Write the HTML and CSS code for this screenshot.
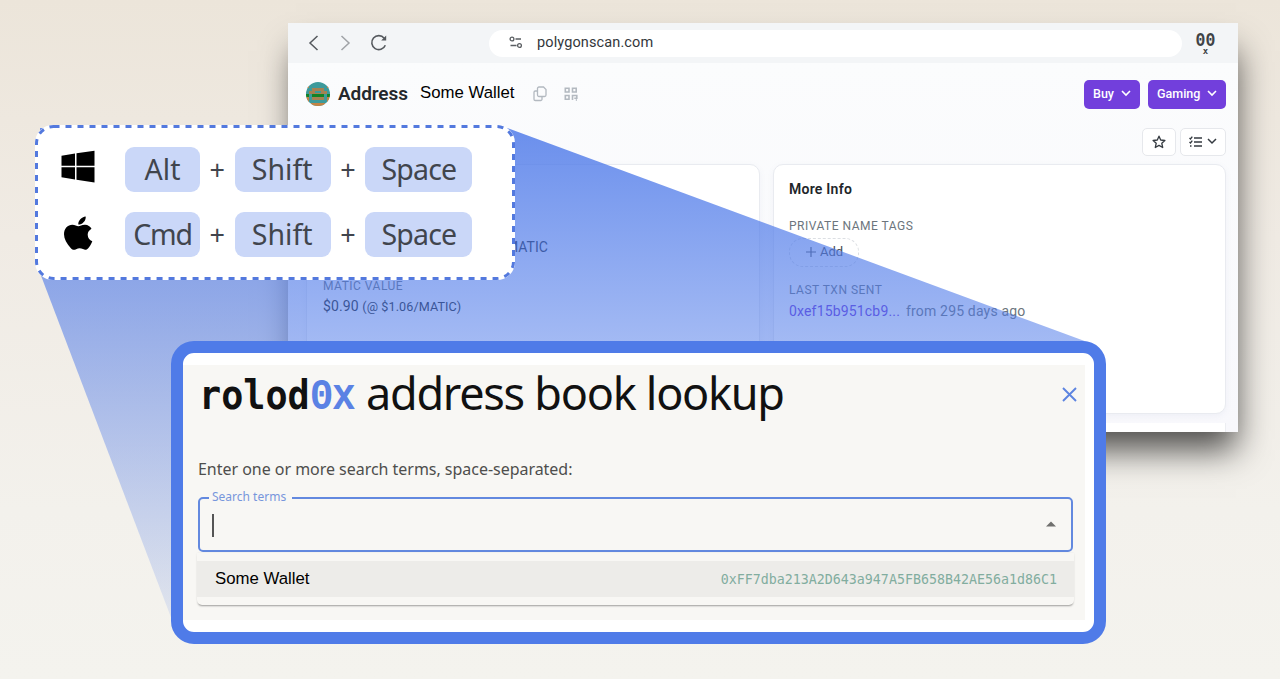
FILE: index.html
```html
<!DOCTYPE html>
<html lang="en">
<head>
<meta charset="utf-8">
<title>rolod0x address book lookup</title>
<link rel="stylesheet" href="styles.css">
</head>
<body>
<main class="stage">
  <section class="browser">
    <header class="toolbar">
      <div class="nav">
        <svg width="12" height="16" viewBox="0 0 12 16"><path d="M9.5 1 2 8l7.500 7" stroke="#55595e"/></svg>
        <svg width="12" height="16" viewBox="0 0 12 16"><path d="M2.500 1 10 8l-7.500 7" stroke="#a0a3a7"/></svg>
        <svg width="18" height="18" viewBox="0 0 18 18"><path d="M15.300 11.200a7 7 0 1 1-1.100-7" stroke="#55595e" stroke-width="1.600"/><path d="M16.200 1.500v5h-5z" fill="#55595e" stroke="none"/></svg>
      </div>
      <div class="urlbar">
        <svg width="14" height="14" viewBox="0 0 14 14" stroke="#5a5e62" stroke-width="1.300"><circle cx="3" cy="3" r="1.900"/><path d="M6.500 3H12M1.500 9.500h6"/><circle cx="10.500" cy="9.500" r="1.900"/></svg>
        <span>polygonscan.com</span>
      </div>
      <div class="ext"><b>00</b><i>x</i></div>
    </header>
    <div class="page">
      <div class="titlebar">
        <svg class="avatar" width="24" height="24" viewBox="0 0 24 24"><defs><clipPath id="disc"><circle cx="12" cy="12" r="12"/></clipPath></defs><g clip-path="url(#disc)" stroke="none"><path fill="#3d9a9b" d="M0 0h24v24H0z"/><path fill="#c48345" d="M0 3h3v3H0zM21 3h3v3h-3zM0 15h3v9H0zM21 15h3v9h-3zM5 21h14v3H5z"/><path fill="#a58252" d="M6 6h12v3h3v3H3V9h3zM6 15h12v3H6z"/><path fill="#3d9a9b" d="M9 9h6v2H9z"/><path fill="#138325" d="M6 12h12v3H6zM0 12h3v3H0zM21 12h3v3h-3z"/></g></svg>
        <h1>Address</h1>
        <span class="wallet">Some Wallet</span>
        <svg class="copy" width="14" height="16" viewBox="0 0 14 16" stroke="#b3b9c0" stroke-width="1.300"><path d="M6 1h4.500L13 3.500V9a1.500 1.500 0 0 1-1.500 1.500H6A1.500 1.500 0 0 1 4.500 9V2.500A1.500 1.500 0 0 1 6 1z"/><path d="M4.500 5H2.300A1.300 1.300 0 0 0 1 6.300v6.900a1.300 1.300 0 0 0 1.300 1.300h5.400A1.300 1.300 0 0 0 9 13.200v-2.700"/></svg>
        <svg width="14" height="14" viewBox="0 0 14 14" stroke="#b3b9c0" stroke-width="1.600"><path d="M1.300 1.300h3.700V5H1.300zM8.500 1.300h3.700V5H8.500zM1.300 8.500h3.700v3.700H1.300z"/><path d="M8.500 13V8.500h4.300v2.700h-2.500M11.800 13h1.200"/></svg>
        <div class="actions">
          <span class="btn buy">Buy <svg width="10" height="7" viewBox="0 0 10 7"><path d="m1 1 4 4 4-4" stroke="#fff" stroke-width="1.600"/></svg></span>
          <span class="btn gaming">Gaming <svg width="10" height="7" viewBox="0 0 10 7"><path d="m1 1 4 4 4-4" stroke="#fff" stroke-width="1.600"/></svg></span>
        </div>
      </div>
      <div class="tools">
        <span class="tool"><svg width="14" height="14" viewBox="0 0 14 14"><path d="m7 1.200 1.700 3.800 4.200.5-3.100 2.800.9 4.200L7 10.400l-3.700 2.100.9-4.200L1.100 5.500l4.200-.5z" stroke="#343a40" stroke-width="1.300" stroke-linejoin="round"/></svg></span>
        <span class="tool wide"><svg width="13" height="12" viewBox="0 0 13 12" stroke="#343a40" stroke-width="1.300"><path d="M5 2h8M5 6h8M5 10h8M.5 2l1 1L3.300.700M.5 6l1 1 1.800-2.300M1 10h1.500"/></svg><svg width="10" height="7" viewBox="0 0 10 7"><path d="m1 1 4 4 4-4" stroke="#343a40" stroke-width="1.500"/></svg></span>
      </div>
      <div class="cards">
        <article class="card overview">
          <p class="amount">MATIC</p>
          <p class="label">MATIC VALUE</p>
          <p class="value">$0.90 <small>(@ $1.06/MATIC)</small></p>
        </article>
        <article class="card info">
          <h2>More Info</h2>
          <p class="label">PRIVATE NAME TAGS</p>
          <span class="add"><svg width="10" height="10" viewBox="0 0 10 10"><path d="M5 0v10M0 5h10" stroke="#55595f" stroke-width="1.200"/></svg>Add</span>
          <p class="label">LAST TXN SENT</p>
          <p class="txn"><a>0xef15b951cb9...</a><span>from 295 days ago</span></p>
        </article>
      </div>
      <div class="nextcard"></div>
    </div>
  </section>

  <svg class="beam" width="1280" height="679" viewBox="0 0 1280 679">
    <defs><linearGradient id="fade" gradientUnits="userSpaceOnUse" x1="0" y1="128" x2="0" y2="630"><stop offset="0" stop-color="#4d79e9" stop-opacity=".83"/><stop offset="1" stop-color="#4d79e9" stop-opacity=".1"/></linearGradient></defs>
    <path fill="url(#fade)" d="M507 128 1090 343V620H172L40 273V128z"/>
  </svg>

  <section class="shortcuts">
    <svg class="dashes" width="480" height="155" viewBox="0 0 480 155"><rect x="1.500" y="1.500" width="477" height="152" rx="17" stroke="#5379de" stroke-width="3" stroke-dasharray="6 6"/></svg>
    <div class="combo">
      <svg class="os" width="34" height="34" viewBox="0 0 34 34" stroke="none"><path d="M.5 5.700 14 3.600v12.200H.5zM15.500 3.300 33.500.700v15.100h-18zM.5 17.200H14v12.200L.5 27.300zM15.500 17.200h18v15.300l-18-2.700z"/></svg>
      <kbd class="k1">Alt</kbd><span>+</span><kbd class="k2">Shift</kbd><span>+</span><kbd class="k3">Space</kbd>
    </div>
    <div class="combo">
      <svg class="os apple" width="34" height="36" viewBox="0 0 34 36" stroke="none"><path d="M17.300 9.600C17 5.600 20.500 2 24.700 1.500c.5 4.300-3.200 8-7.400 8.100zM30.500 13.700c-2.300 1.400-3.800 3.200-3.800 6 0 3.100 1.900 5.500 4.600 6.500-1 3-2.600 5.300-4.300 7.200-1.500 1.600-3 1.600-5 .7-2.500-1.100-4.500-1-6.900.1-2 .9-3.600.7-5.200-1C5.700 28.800 3 24 3 19.300c0-6 3.800-9.600 8.300-9.600 2.500 0 4.500 1.600 6.100 1.600s3.700-1.800 6.800-1.600c2.700.2 4.900 1.500 6.300 4z"/></svg>
      <kbd class="k1 cmd">Cmd</kbd><span>+</span><kbd class="k2">Shift</kbd><span>+</span><kbd class="k3">Space</kbd>
    </div>
  </section>

  <section class="popup">
    <div class="panel">
      <div class="heading">
        <b class="logo">rolod<em>0x</em></b><span class="name">address book lookup</span>
        <svg class="close" width="15" height="15" viewBox="0 0 15 15"><path d="m1 1 13 13M14 1 1 14" stroke="#5d84e0" stroke-width="1.900"/></svg>
      </div>
      <p class="hint">Enter one or more search terms, space-separated:</p>
      <fieldset class="field">
        <legend>Search terms</legend>
        <span class="caret"></span>
        <svg class="arrow" width="10" height="6" viewBox="0 0 10 6"><path d="M0 5.500 5 .5l5 5z" fill="#70706e"/></svg>
      </fieldset>
      <div class="list">
        <div class="option"><span>Some Wallet</span><code>0xFF7dba213A2D643a947A5FB658B42AE56a1d86C1</code></div>
      </div>
    </div>
  </section>
</main>
</body>
</html>
```

FILE: styles.css
```css
* { box-sizing: border-box; }
body { margin: 0; }
p, h1, h2 { margin: 0; font-weight: 400; }
svg { display: block; fill: none; flex: none; }

.stage {
  position: relative;
  width: 1280px;
  height: 679px;
  overflow: hidden;
  background: linear-gradient(180deg, #ece5da 0, #f0ebe4 35%, #f3f1ec 75%, #f4f3ee 100%);
  font-family: Roboto, "Liberation Sans", sans-serif;
}

/* Browser window */
.browser {
  position: absolute;
  left: 288px;
  top: 23px;
  width: 950px;
  height: 409px;
  display: flex;
  flex-direction: column;
  background: #fafbfd;
  box-shadow: 3px 23px 32px -5px rgba(0, 0, 0, .68);
}
.toolbar {
  height: 40px;
  display: flex;
  align-items: center;
  background: #f3f5f7;
  flex: none;
}
.nav { display: flex; align-items: center; gap: 19px; width: 201px; padding-left: 19.5px; stroke-width: 1.5; }
.urlbar {
  width: 693px;
  height: 27px;
  border-radius: 14px;
  padding: 0 0 1px 20px;
  display: flex;
  align-items: center;
  gap: 14px;
  background: #fff;
  color: #33373b;
  font-size: 14.5px;
  letter-spacing: .12px;
}
.ext { width: 47px; padding-top: 3px; display: flex; flex-direction: column; align-items: center; color: #404346; }
.ext b { font: bold 16.5px/14px "Liberation Mono", monospace; transform: scaleY(1.2); }
.ext i { font: bold 9px/7px "DejaVu Sans Mono", monospace; }

.page { flex: 1; padding: 0 12px 0 18px; display: flex; flex-direction: column; background: linear-gradient(#fbfcfd, #f8f8fc); }
.titlebar { display: flex; align-items: center; height: 62px; }
.titlebar h1 { margin-left: 8px; width: 82px; padding-bottom: 2px; font-size: 19px; font-weight: 600; color: #24282c; letter-spacing: -.1px; }
.wallet { font: 16.8px "Liberation Sans", sans-serif; color: #000; width: 113px; padding-bottom: 2px; }
.copy { margin-right: 17px; }
.actions { margin-left: auto; display: flex; gap: 8px; }
.btn {
  height: 29px;
  border-radius: 5px;
  padding: 0 9px 2px;
  display: flex;
  align-items: center;
  justify-content: space-between;
  background: #723fdc;
  color: #fff;
  font-size: 12.5px;
  font-weight: 500;
}
.buy { width: 56px; }
.gaming { width: 78px; }
.tools { display: flex; justify-content: flex-end; gap: 4px; padding-top: 3px; height: 39px; }
.tool { width: 34px; height: 28px; display: flex; align-items: center; justify-content: center; gap: 5px; background: #fff; border: 1px solid #e6e8ec; border-radius: 5px; }
.tool.wide { width: 46px; padding-bottom: 1px; }
.cards { display: grid; grid-template-columns: 454px 453px; gap: 13px; height: 250px; }
.card { background: #fff; border: 1px solid #e9ebf0; border-radius: 10px; box-shadow: 0 2px 6px rgba(120, 130, 170, .07); }
.overview { padding: 73px 16px 0; }
.amount { font-size: 14px; line-height: 18px; padding-left: 183px; color: #212529; }
.label { font-size: 12px; line-height: 16px; letter-spacing: .5px; color: #6c757d; }
.overview .label { margin-top: 22px; }
.value { font-size: 14px; line-height: 20px; margin-top: 2px; color: #212529; letter-spacing: .1px; }
.value small { font-size: 12.6px; }
.info { padding: 15px 15px 0; }
.info h2 { font-size: 14px; line-height: 18px; font-weight: 600; color: #212529; margin-bottom: 20px; letter-spacing: .25px; }
.add { display: flex; align-items: center; justify-content: center; gap: 4px; width: 70px; height: 29px; margin: 4px 0 15px; padding: 0 0 2px 1px; border: 1px dashed #dcdfe3; border-radius: 14px; font-size: 13px; color: #494e54; }
.txn { display: flex; gap: 6px; font-size: 14px; line-height: 20px; color: #6c757d; letter-spacing: .17px; margin-top: 3px; }
.txn a { color: #6b37db; }
.nextcard { margin-top: 9px; height: 9px; background: #fff; border-right: 1px solid #eceef2; }

.beam { position: absolute; inset: 0; }

/* Keyboard shortcuts */
.shortcuts {
  position: absolute;
  left: 35px;
  top: 125px;
  width: 480px;
  height: 155px;
  padding: 22px 0 0 25px;
  display: flex;
  flex-direction: column;
  gap: 20px;
  background: #fff;
  border-radius: 18px;
}
.dashes { position: absolute; inset: 0; }
.combo { display: flex; align-items: center; height: 45px; color: #41454d; }
.combo span { width: 34.7px; text-align: center; font: 27px/40px "Noto Sans", "Open Sans", sans-serif; }
.os { fill: #000; margin: -6px 30.5px 0 .5px; }
.apple { margin-top: -4px; }
kbd { height: 45px; border-radius: 9px; background: #cad7f8; display: flex; align-items: center; justify-content: center; font: 28.5px/45px "Noto Sans", "Open Sans", sans-serif; }
.k1 { width: 75px; }
.k2 { width: 96px; padding-right: 1px; }
.k3 { width: 107px; letter-spacing: -.8px; }
.cmd { letter-spacing: -1.2px; }

/* Lookup popup */
.popup {
  position: absolute;
  left: 171px;
  top: 341px;
  width: 935px;
  height: 302.5px;
  border: 12px solid #4f7be8;
  border-radius: 23px;
  padding: 12px 9px 11px 0;
  background: #fff;
}
.panel { height: 255px; padding: 0 12px 0 15px; background: #f8f7f4; }
.heading { display: flex; height: 88px; align-items: flex-start; color: #111; }
.logo { width: 168px; padding: 4px 0 0 1px; font: bold 36.8px/52px "DejaVu Sans Mono", monospace; transform: scaleY(1.12); }
.logo em { font: bold 39.5px/40px "Liberation Mono", monospace; letter-spacing: -1.5px; color: #5b82e4; }
.name { font: 45px/55px "Noto Sans", "Open Sans", sans-serif; letter-spacing: -1.27px; white-space: nowrap; }
.close { margin: 22px -4px 0 auto; }
.hint { font: 16px/32px "Noto Sans", "Open Sans", sans-serif; color: #4e4e4c; letter-spacing: -.03px; }
.field { height: 63px; margin: 4px 0 1px; padding: 0 15px 0 12px; border: 2px solid #6389df; border-radius: 5px; display: flex; align-items: center; justify-content: space-between; }
.field legend { padding: 0 6px 1px 3px; margin-left: -3px; font: 12px/16px "Noto Sans", "Open Sans", sans-serif; color: #7796dc; }
.caret { width: 1.5px; height: 23px; margin-bottom: 6px; background: #555; }
.arrow { margin-bottom: 8px; }
.list { height: 52px; padding: 8px 0; border-radius: 0 0 5px 5px; box-shadow: 0 2px 2px -1px rgba(0, 0, 0, .35), 0 0 2px rgba(0, 0, 0, .08); margin: 0 -1px; }
.option { height: 36px; display: flex; align-items: center; justify-content: space-between; padding: 0 17px 0 18px; background: #edece9; }
.option span { font: 16.8px "Liberation Sans", sans-serif; color: #000; }
.option code { font: 13.3px "DejaVu Sans Mono", monospace; color: #82ad9f; }
```
